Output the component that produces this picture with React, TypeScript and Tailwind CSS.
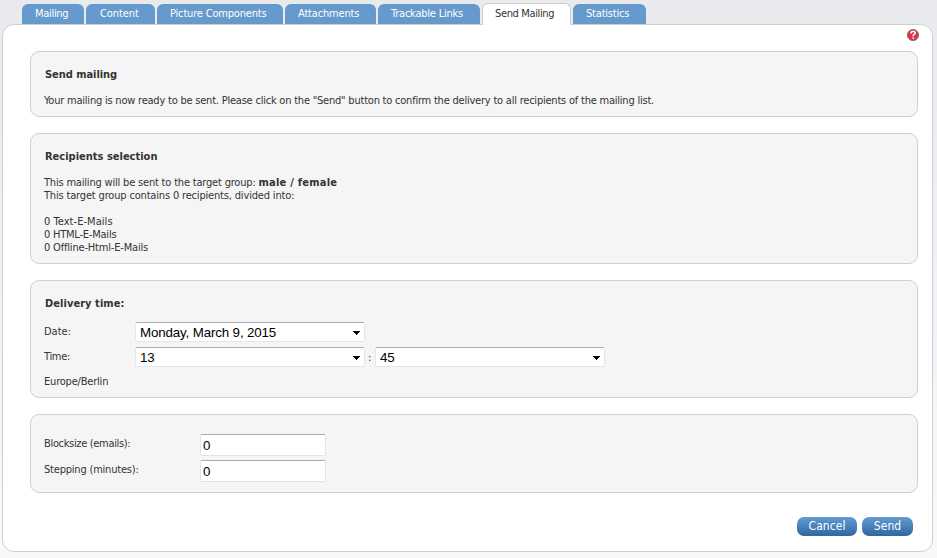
import React from "react";

const tabs = [
  { label: "Mailing", box: "w-[62px] pl-[13px]", text: "tracking-[-0.3px]" },
  { label: "Content", box: "w-[69px] pl-[14px]", text: "tracking-[-0.1px]" },
  { label: "Picture Components", box: "w-[126px] pl-[13px]", text: "tracking-[-0.18px]" },
  { label: "Attachments", box: "w-[91px] pl-[13px]", text: "tracking-[-0.18px]" },
  { label: "Trackable Links", box: "w-[102px] pl-[13px]", text: "tracking-[-0.22px]" },
  { label: "Send Mailing", box: "w-[89px] pl-[12px]", text: "tracking-[-0.36px]", active: true },
  { label: "Statistics", box: "w-[73px] pl-[13px]", text: "tracking-[-0.2px]" },
];

function Box({ className, children }: { className: string; children: React.ReactNode }) {
  return (
    <section className={`rounded-[9px] border border-[#cfcfcf] bg-[#f5f5f5] pl-[13px] ${className}`}>
      {children}
    </section>
  );
}

function Select({ value }: { value: string }) {
  return (
    <div className="flex h-5 w-[230px] items-center justify-between rounded-[2px] border border-[#e2e7ee] border-t-[#abadb3] bg-white pr-1 pl-1 font-['Liberation_Sans',sans-serif] text-[13.33px] leading-[18px] tracking-[-0.14px] text-black">
      <span className="pt-[2px]">{value}</span>
      <svg width="7" height="4" viewBox="0 0 7 4" className="mt-px" shapeRendering="crispEdges">
        <path d="M0 0h7v1H6v1H5v1H4v1H3V3H2V2H1V1H0z" />
      </svg>
    </div>
  );
}

function Input() {
  return (
    <input
      readOnly
      value="0"
      className="h-[22px] w-[126px] rounded-[2px] border border-[#e2e3ea] border-t-[#abadb3] bg-white pt-px pl-[2px] font-['Liberation_Sans',sans-serif] text-[13.33px] text-black outline-none"
    />
  );
}

const button =
  "flex h-[19px] justify-center rounded-[7px] bg-linear-to-b from-[#649bd0] to-[#2d68a3] text-[12px] leading-[19px] tracking-[0.05px] text-white";

export default function App() {
  return (
    <div className="h-[558px] w-[937px] overflow-hidden bg-linear-to-b from-[#e9eaee] to-[#f8f9fb] font-['DejaVu_Sans_Condensed','DejaVu_Sans',sans-serif] text-[11px] leading-[13px] whitespace-nowrap text-[#333] [font-stretch:condensed]">
      <nav className="relative flex h-[25px] items-end gap-[2px] pl-[22px]">
        {tabs.map((t) =>
          t.active ? (
            <div key={t.label} className={`h-[22px] rounded-t-[6px] border border-b-0 border-[#cfcfcf] bg-white pt-[3px] ${t.box}`}>
              <span className={t.text}>{t.label}</span>
            </div>
          ) : (
            <div key={t.label} className={`mb-px h-5 rounded-t-[6px] bg-[#6699cc] pt-[3px] text-white ${t.box}`}>
              <span className={t.text}>{t.label}</span>
            </div>
          ),
        )}
      </nav>
      <main className="-mt-px ml-[2px] flex h-[528px] w-[931px] flex-col rounded-[12px] border border-[#cfcfcf] bg-white pl-[27px]">
        <div className="flex h-[26px] pt-1 pl-[877px]">
          <svg width="12" height="12" viewBox="0 0 12 12">
            <circle cx="6" cy="6" r="5.5" fill="#e2324b" stroke="#7a6770" />
            <path d="M4 4.4V3.5L5 2.5h2.2l1 1v1L6.3 6v1.2" fill="none" stroke="#fff" strokeWidth="1.5" />
            <path d="M5.5 8.4h1.6v1.5H5.5z" fill="#fff" />
          </svg>
        </div>

        <Box className="h-[66px] w-[888px] shrink-0 pt-4">
          <h2 className="pl-px font-bold tracking-[-0.05px]">Send mailing</h2>
          <p className="mt-[13px] tracking-[-0.217px]">
            Your mailing is now ready to be sent. Please click on the "Send" button to confirm the delivery to all recipients of the mailing list.
          </p>
        </Box>

        <Box className="mt-4 h-[131px] w-[888px] shrink-0 pt-4">
          <h2 className="pl-px font-bold">Recipients selection</h2>
          <p className="mt-[13px]">
            <span className="tracking-[-0.19px]">This mailing will be sent to the target group: </span>
            <b className="tracking-[0.24px]">male / female</b>
          </p>
          <p className="tracking-[-0.17px]">This target group contains 0 recipients, divided into:</p>
          <p className="mt-[13px] tracking-[0.05px]">0 Text-E-Mails</p>
          <p className="tracking-[-0.22px]">0 HTML-E-Mails</p>
          <p className="tracking-[-0.18px]">0 Offline-Html-E-Mails</p>
        </Box>

        <Box className="mt-4 h-[118px] w-[888px] shrink-0 pt-4">
          <h2 className="pl-px font-bold tracking-[0.05px]">Delivery time:</h2>
          <div className="mt-3 flex h-5">
            <label className="w-[91px] pt-[3px] tracking-[0px]">Date:</label>
            <Select value="Monday, March 9, 2015" />
          </div>
          <div className="mt-[5px] flex h-5">
            <label className="w-[91px] pt-[3px] tracking-[-0.3px]">Time:</label>
            <Select value="13" />
            <span className="w-[10px] pt-1 pl-[3px]">:</span>
            <Select value="45" />
          </div>
          <p className="mt-2 tracking-[-0.2px]">Europe/Berlin</p>
        </Box>

        <Box className="mt-4 h-[79px] w-[888px] shrink-0 pt-[19px]">
          <div className="flex">
            <label className="w-[156px] pt-[3px] tracking-[-0.33px]">Blocksize (emails):</label>
            <Input />
          </div>
          <div className="mt-1 flex">
            <label className="w-[156px] pt-[3px] tracking-[-0.2px]">Stepping (minutes):</label>
            <Input />
          </div>
        </Box>

        <div className="mt-6 flex gap-[5px] pl-[767px]">
          <div className={`w-[60px] ${button}`}>Cancel</div>
          <div className={`w-[51px] ${button}`}>Send</div>
        </div>
      </main>
    </div>
  );
}
